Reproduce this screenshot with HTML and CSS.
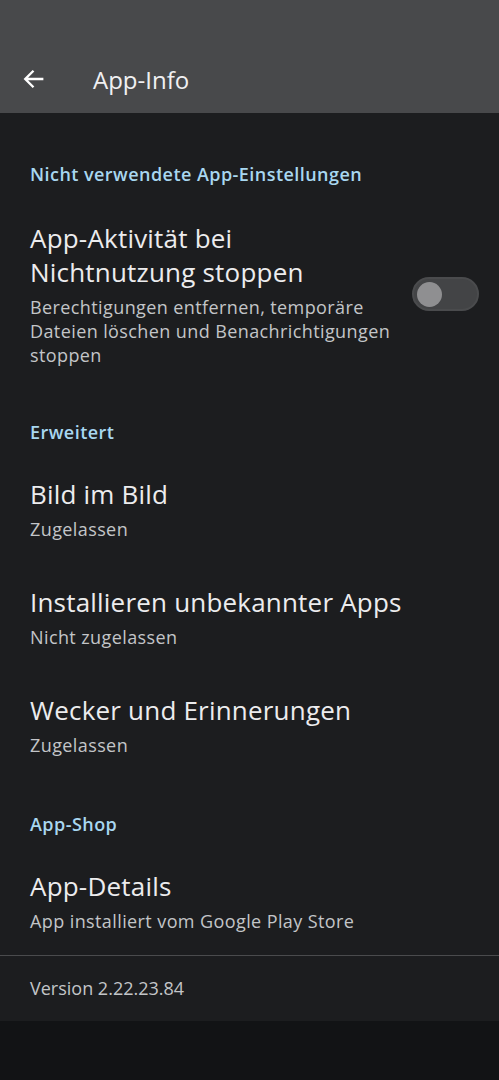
FILE: index.html
```html
<!DOCTYPE html>
<html lang="de">
<head>
    <meta charset="UTF-8">
    <meta name="viewport" content="width=device-width, initial-scale=1.0">
    <title>App-Info</title>
    <link rel="stylesheet" href="styles.css">
</head>
<body>
    <!-- Top app bar -->
    <header class="app-bar">
        <div class="app-bar-row">
            <svg class="back-icon" viewBox="0 0 24 24" width="30" height="30">
                <path d="M19.5 12H5.2M11.6 5.4L5 12l6.6 6.6" fill="none" stroke="#ffffff" stroke-width="1.9"/>
            </svg>
            <h1 class="app-bar-title">App-Info</h1>
        </div>
    </header>

    <main class="settings">
        <div class="category first">Nicht verwendete App-Einstellungen</div>
        <div class="pref with-switch">
            <div class="pref-text">
                <div class="pref-title">App-Aktivität bei Nichtnutzung stoppen</div>
                <div class="pref-summary">Berechtigungen entfernen, temporäre Dateien löschen und Benachrichtigungen stoppen</div>
            </div>
            <div class="switch"><span class="switch-thumb"></span></div>
        </div>

        <div class="category">Erweitert</div>
        <div class="pref">
            <div class="pref-title">Bild im Bild</div>
            <div class="pref-summary">Zugelassen</div>
        </div>
        <div class="pref">
            <div class="pref-title">Installieren unbekannter Apps</div>
            <div class="pref-summary">Nicht zugelassen</div>
        </div>
        <div class="pref">
            <div class="pref-title">Wecker und Erinnerungen</div>
            <div class="pref-summary">Zugelassen</div>
        </div>

        <div class="category">App-Shop</div>
        <div class="pref">
            <div class="pref-title">App-Details</div>
            <div class="pref-summary">App installiert vom Google Play Store</div>
        </div>

        <div class="footer">Version 2.22.23.84</div>
    </main>
</body>
</html>
```

FILE: styles.css
```css
body {
    margin: 0;
    background-color: #121315;
    font-family: "Open Sans", "Noto Sans", sans-serif;
    color: #e6e6e8;
}
.app-bar {
    height: 113px;
    box-sizing: border-box;
    background-color: #48494b;
    display: flex;
    align-items: flex-end;
    padding-bottom: 11px;
}
.app-bar-row {
    display: flex;
    align-items: center;
    height: 46px;
    padding-left: 19px;
}
.back-icon {
    display: block;
}
.app-bar-title {
    margin: 0 0 0 44px;
    font-size: 24px;
    font-weight: normal;
    color: #f0f0f2;
}
.settings {
    background-color: #1c1d1f;
    padding-top: 18px;
}
.category {
    padding: 33px 30px 11px;
    font-size: 18px;
    font-weight: 600;
    letter-spacing: 0.45px;
    line-height: 24px;
    color: #a8d7f0;
}
.category.first {
    padding-top: 31px;
    padding-bottom: 13px;
}
.pref {
    padding: 22px 30px;
}
.pref.with-switch {
    display: flex;
    align-items: center;
    padding-right: 20px;
    padding-bottom: 20px;
}
.pref-text {
    flex: 1;
    padding-right: 10px;
}
.pref-title {
    font-size: 26px;
    letter-spacing: 0.2px;
    line-height: 34px;
    color: #ececee;
}
.pref-summary {
    margin-top: 6px;
    font-size: 18px;
    letter-spacing: 0.4px;
    line-height: 24px;
    color: #c3c5c8;
}
.switch {
    width: 67px;
    height: 34px;
    flex-shrink: 0;
    box-sizing: border-box;
    border-radius: 17px;
    background-color: #434446;
    border: 2px solid #4a4b4d;
    display: flex;
    align-items: center;
    padding-left: 3px;
}
.switch-thumb {
    width: 25px;
    height: 25px;
    border-radius: 50%;
    background-color: #8f8f91;
}
.footer {
    border-top: 1px solid #4a4b4d;
    padding: 20px 30px 21px;
    font-size: 18px;
    line-height: 24px;
    color: #c3c5c8;
}
```
